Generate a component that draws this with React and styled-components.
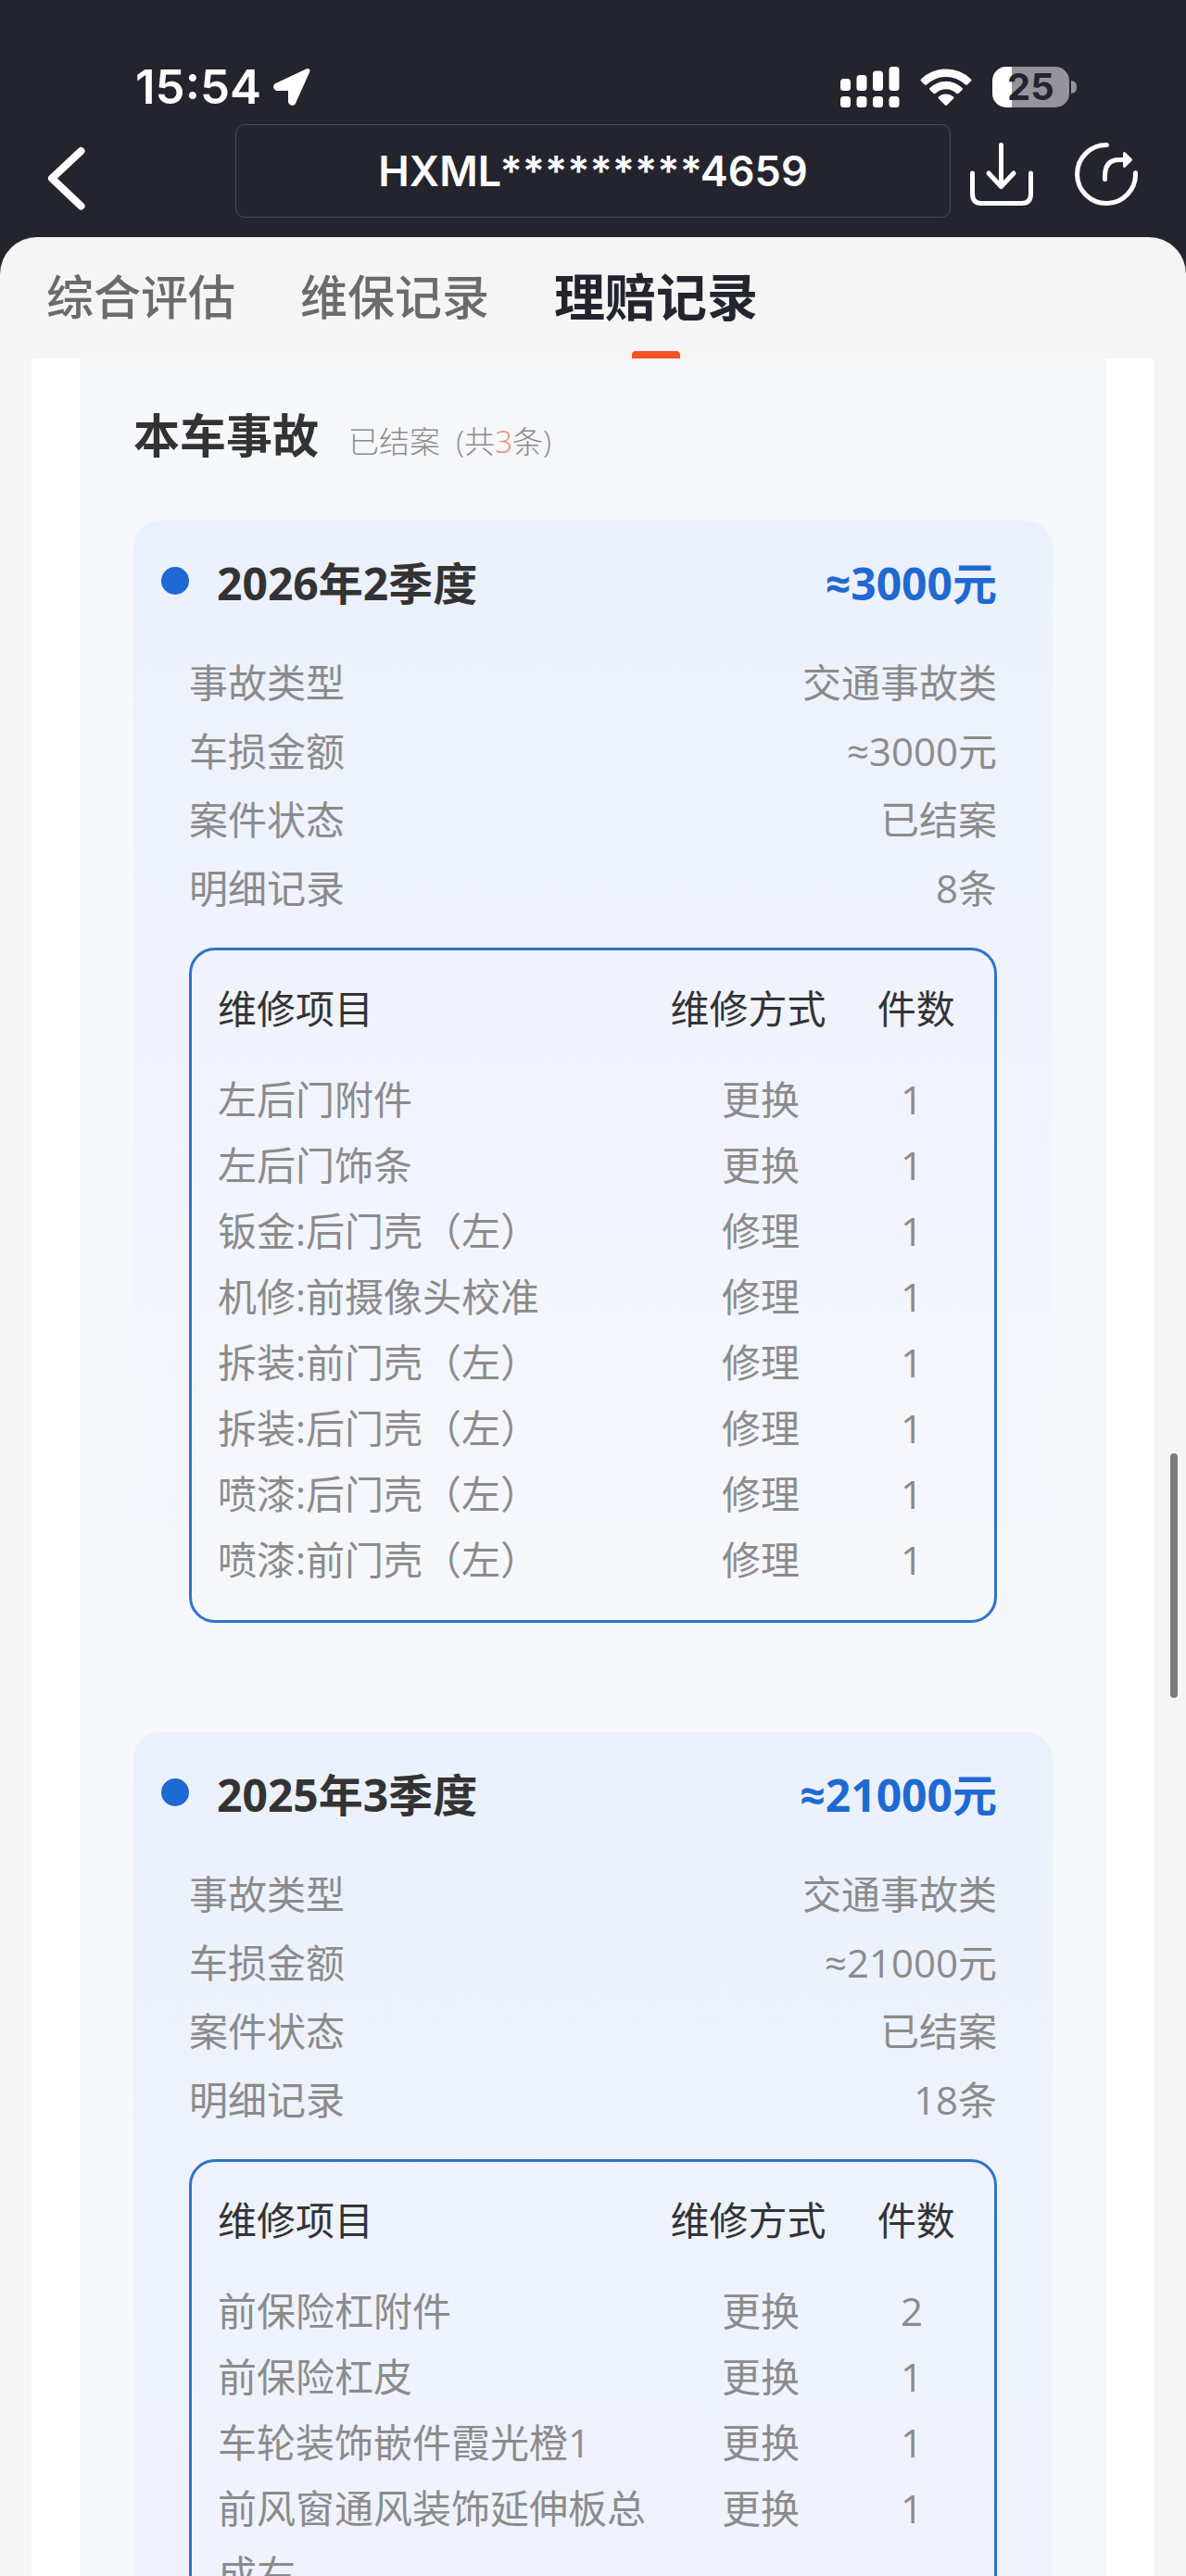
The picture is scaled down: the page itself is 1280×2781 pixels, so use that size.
import React from 'react';
import styled, { createGlobalStyle, ThemeProvider } from 'styled-components';

const theme = {
  colors: {
    navy: '#24242e',
    navBorder: '#4a4a56',
    page: '#f5f5f5',
    panel: '#f5f7fb',
    cardTop: '#ebf1fc',
    cardMiddle: '#f0f3fe',
    text: '#333333',
    muted: '#8b8b8b',
    tab: '#6b6b6e',
    blue: '#1f69d2',
    tableBorder: '#2f72c9',
    accent: '#f45127',
    count: '#fa8a78',
  },
  fonts: {
    ui: '"Inter", "Noto Sans CJK SC", sans-serif',
    report: '"Open Sans", "Noto Sans CJK SC", sans-serif',
  },
};

const GlobalStyle = createGlobalStyle`
  * {
    box-sizing: border-box;
  }

  body {
    margin: 0;
  }

  h1, h2, h3, p, dl, dd {
    margin: 0;
  }

  button {
    padding: 0;
    border: 0;
    background: none;
    font: inherit;
    color: inherit;
    cursor: pointer;
  }
`;

const Screen = styled.div`
  display: flex;
  flex-direction: column;
  height: 100vh;
  overflow: hidden;
  background: ${({ theme }) => theme.colors.navy};
  font-family: ${({ theme }) => theme.fonts.ui};
`;

const StatusBar = styled.div`
  display: flex;
  justify-content: space-between;
  align-items: center;
  padding: 66px 118px 0 146px;
  color: #fff;
`;

const StatusGroup = styled.div`
  display: flex;
  align-items: center;
  gap: ${({ $gap }) => $gap}px;
  height: 56px;
`;

const Clock = styled.span`
  font-size: 51px;
  font-weight: 600;
  line-height: 56px;
`;

const Battery = styled.div`
  display: flex;
  align-items: center;
  gap: 2px;
`;

const BatteryBody = styled.div`
  width: 83px;
  height: 44px;
  border-radius: 15px;
  background: linear-gradient(to right, #fff 25%, #95949b 25%);
  color: ${({ theme }) => theme.colors.navy};
  font-size: 40px;
  font-weight: 700;
  line-height: 44px;
  text-align: center;
`;

const BatteryCap = styled.div`
  width: 6px;
  height: 14px;
  border-radius: 0 6px 6px 0;
  background: #95949b;
`;

const NavBar = styled.header`
  display: grid;
  grid-template-columns: 203px 1fr 203px;
  align-items: center;
  margin: 12px 0 21px;
  padding: 0 51px;
`;

const NavActions = styled.div`
  display: flex;
  justify-content: flex-end;
  gap: 44px;
`;

const IconButton = styled.button`
  display: flex;
`;

const VinField = styled.input`
  width: 100%;
  height: 101px;
  padding: 0;
  border: 1px solid ${({ theme }) => theme.colors.navBorder};
  border-radius: 10px;
  background: transparent;
  color: #fff;
  font-family: inherit;
  font-size: 45px;
  font-weight: 600;
  text-align: center;
  outline: none;
`;

const Sheet = styled.main`
  position: relative;
  display: flex;
  flex: 1;
  flex-direction: column;
  min-height: 0;
  border-radius: 40px 40px 0 0;
  background: ${({ theme }) => theme.colors.page};
`;

const Tabs = styled.nav`
  display: flex;
  flex: none;
  gap: 70px;
  height: 131px;
  padding: 0 50px;
`;

const Tab = styled.button`
  position: relative;
  color: ${({ theme, $active }) => ($active ? theme.colors.navy : theme.colors.tab)};
  font-size: ${({ $active }) => ($active ? 55 : 51)}px;
  font-weight: ${({ $active }) => ($active ? 700 : 500)};
  line-height: 131px;

  &::after {
    content: '';
    display: ${({ $active }) => ($active ? 'block' : 'none')};
    position: absolute;
    bottom: 0;
    left: 50%;
    width: 52px;
    height: 8px;
    margin-left: -26px;
    border-radius: 4px 4px 0 0;
    background: ${({ theme }) => theme.colors.accent};
  }
`;

const Report = styled.div`
  flex: 1;
  min-height: 0;
  margin: 0 34px;
  padding: 0 52px;
  overflow: hidden;
  border-radius: 5px 5px 0 0;
  background: #fff;
  font-family: ${({ theme }) => theme.fonts.report};
`;

const Section = styled.section`
  min-height: 100%;
  padding: 48px 58px 0;
  background: ${({ theme }) => theme.colors.panel};
`;

const SectionHeader = styled.div`
  display: flex;
  align-items: baseline;
  gap: 32px;
  padding-bottom: 50px;
  line-height: 70px;
`;

const SectionTitle = styled.h2`
  color: ${({ theme }) => theme.colors.text};
  font-size: 50px;
  font-weight: 700;
`;

const SectionNote = styled.p`
  color: ${({ theme }) => theme.colors.muted};
  font-size: 33px;
  font-weight: 300;
`;

const Count = styled.span`
  color: ${({ theme }) => theme.colors.count};
`;

const Card = styled.article`
  margin-bottom: 58px;
  padding: 33px 60px 60px;
  border-radius: 28px;
  background: linear-gradient(
    ${({ theme }) => theme.colors.cardTop},
    ${({ theme }) => theme.colors.cardMiddle} ${({ $fade }) => $fade / 2}px,
    ${({ theme }) => theme.colors.panel} ${({ $fade }) => $fade}px
  );
`;

const CardHeader = styled.div`
  display: flex;
  align-items: flex-start;
  gap: 30px;
  margin: 0 0 35px -30px;
  line-height: 70px;
`;

const Dot = styled.span`
  width: 30px;
  height: 30px;
  margin-top: 17px;
  border-radius: 50%;
  background: ${({ theme }) => theme.colors.blue};
`;

const Quarter = styled.h3`
  flex: 1;
  color: ${({ theme }) => theme.colors.text};
  font-size: 48px;
  font-weight: 700;
`;

const Amount = styled.span`
  color: ${({ theme }) => theme.colors.blue};
  font-size: 48px;
  font-weight: 700;
`;

const Details = styled.dl`
  color: ${({ theme }) => theme.colors.muted};
  font-size: 42px;
  line-height: 74px;
`;

const DetailRow = styled.div`
  display: flex;
  justify-content: space-between;
`;

const TableBox = styled.div`
  margin-top: 27px;
  padding: 0 24px 30px 28px;
  border: 3px solid ${({ theme }) => theme.colors.tableBorder};
  border-radius: 28px;
`;

const RepairTable = styled.table`
  width: 100%;
  border-collapse: collapse;
  table-layout: fixed;
  font-size: 42px;
  line-height: 71px;
`;

const HeadCell = styled.th`
  width: ${({ $width }) => $width};
  padding: 27px 0 27px ${({ $indent }) => $indent || 0}px;
  color: ${({ theme }) => theme.colors.text};
  font-weight: 400;
  text-align: left;
  white-space: nowrap;
`;

const Cell = styled.td`
  padding: 0;
  color: ${({ theme }) => theme.colors.muted};
  text-align: ${({ $center }) => ($center ? 'center' : 'left')};
  vertical-align: top;
`;

const ScrollThumb = styled.div`
  position: absolute;
  top: 52%;
  right: 9px;
  width: 8px;
  height: 264px;
  border-radius: 4px;
  background: #7b7b7b;
`;

const LocationIcon = () => (
  <svg width="42" height="42" viewBox="0 0 42 42" fill="#fff" stroke="#fff" strokeWidth="5" strokeLinejoin="round">
    <path d="M38 3.500L4 19.500Q3 21.500 5 22.500H19.500V37Q20.500 39 22.500 38Z" />
  </svg>
);

const SignalIcon = () => (
  <svg width="64" height="44" viewBox="0 0 64 44" fill="#fff">
    <rect x="0" y="13" width="11" height="13" rx="3.500" />
    <rect x="17.500" y="9" width="11" height="17" rx="3.500" />
    <rect x="35" y="4.500" width="11" height="21.500" rx="3.500" />
    <rect x="52.500" y="0" width="11" height="26" rx="3.500" />
    <rect x="0" y="32" width="11" height="12" rx="3.500" />
    <rect x="17.500" y="32" width="11" height="12" rx="3.500" />
    <rect x="35" y="32" width="11" height="12" rx="3.500" />
    <rect x="52.500" y="32" width="11" height="12" rx="3.500" />
  </svg>
);

const WifiIcon = () => (
  <svg width="56" height="42" viewBox="0 0 56 42" fill="#fff">
    <path d="M1 12.500A38.500 38.500 0 0 1 55 12.500Q56 13.500 55 14.500L51 18.500Q50 19.200 49 18.500A30 30 0 0 0 7 18.500Q6 19.200 5 18.500L1 14.500Q0 13.500 1 12.500Z" />
    <path d="M10.500 22A25 25 0 0 1 45.500 22Q46.300 23 45.500 24L41.300 28Q40.500 28.600 39.500 28A16.500 16.500 0 0 0 16.500 28Q15.500 28.600 14.700 28L10.500 24Q9.700 23 10.500 22Z" />
    <path d="M20 31.500A12 12 0 0 1 36 31.500Q36.800 32.500 36 33.500L29 40.500Q28 41.300 27 40.500L20 33.500Q19.200 32.500 20 31.500Z" />
  </svg>
);

const BackIcon = () => (
  <svg width="42" height="84" viewBox="0 0 42 84" fill="none" stroke="#fff" strokeWidth="8" strokeLinecap="round" strokeLinejoin="round">
    <path d="M36.500 20L5 49.500L36.500 79.500" />
  </svg>
);

const DownloadIcon = () => (
  <svg width="68" height="74" viewBox="0 0 68 74" fill="none" stroke="#fff" strokeWidth="5" strokeLinecap="round" strokeLinejoin="round">
    <path d="M33.500 8.500V52M20 39L33.500 53.500L47 39" />
    <path d="M2.500 39V61Q2.500 71.500 12 71.500H56Q65.500 71.500 65.500 61V39" />
  </svg>
);

const ShareIcon = () => (
  <svg width="70" height="74" viewBox="0 0 70 74" fill="none" stroke="#fff" strokeWidth="5" strokeLinecap="round" strokeLinejoin="round">
    <path d="M35.500 8.500A31.500 31.500 0 1 0 66.500 38.500" />
    <path d="M33.500 45.500V42Q33.500 24.500 49 24.500H58" />
    <path d="M54.500 17.500L61.500 24.500L54.500 31.500Z" fill="#fff" strokeWidth="3" />
  </svg>
);

const tabs = ['综合评估', '维保记录', '理赔记录'];

const accidents = [
  {
    quarter: '2026年2季度',
    amount: '≈3000元',
    fade: 1100,
    details: [
      ['事故类型', '交通事故类'],
      ['车损金额', '≈3000元'],
      ['案件状态', '已结案'],
      ['明细记录', '8条'],
    ],
    repairs: [
      ['左后门附件', '更换', 1],
      ['左后门饰条', '更换', 1],
      ['钣金:后门壳（左）', '修理', 1],
      ['机修:前摄像头校准', '修理', 1],
      ['拆装:前门壳（左）', '修理', 1],
      ['拆装:后门壳（左）', '修理', 1],
      ['喷漆:后门壳（左）', '修理', 1],
      ['喷漆:前门壳（左）', '修理', 1],
    ],
  },
  {
    quarter: '2025年3季度',
    amount: '≈21000元',
    fade: 2000,
    details: [
      ['事故类型', '交通事故类'],
      ['车损金额', '≈21000元'],
      ['案件状态', '已结案'],
      ['明细记录', '18条'],
    ],
    repairs: [
      ['前保险杠附件', '更换', 2],
      ['前保险杠皮', '更换', 1],
      ['车轮装饰嵌件霞光橙1', '更换', 1],
      ['前风窗通风装饰延伸板总成右', '更换', 1],
    ],
  },
];

const AccidentCard = ({ quarter, amount, fade, details, repairs }) => (
  <Card $fade={fade}>
    <CardHeader>
      <Dot />
      <Quarter>{quarter}</Quarter>
      <Amount>{amount}</Amount>
    </CardHeader>
    <Details>
      {details.map(([label, value]) => (
        <DetailRow key={label}>
          <dt>{label}</dt>
          <dd>{value}</dd>
        </DetailRow>
      ))}
    </Details>
    <TableBox>
      <RepairTable>
        <thead>
          <tr>
            <HeadCell scope="col">维修项目</HeadCell>
            <HeadCell scope="col" $width="24%">维修方式</HeadCell>
            <HeadCell scope="col" $width="16%" $indent={28}>件数</HeadCell>
          </tr>
        </thead>
        <tbody>
          {repairs.map(([name, method, count]) => (
            <tr key={name}>
              <Cell>{name}</Cell>
              <Cell $center>{method}</Cell>
              <Cell $center>{count}</Cell>
            </tr>
          ))}
        </tbody>
      </RepairTable>
    </TableBox>
  </Card>
);

export default () => (
  <ThemeProvider theme={theme}>
    <GlobalStyle />
    <Screen>
      <StatusBar>
        <StatusGroup $gap={12}>
          <Clock>15:54</Clock>
          <LocationIcon />
        </StatusGroup>
        <StatusGroup $gap={22}>
          <SignalIcon />
          <WifiIcon />
          <Battery>
            <BatteryBody>25</BatteryBody>
            <BatteryCap />
          </Battery>
        </StatusGroup>
      </StatusBar>
      <NavBar>
        <IconButton aria-label="返回">
          <BackIcon />
        </IconButton>
        <VinField aria-label="车架号" value="HXML*********4659" readOnly />
        <NavActions>
          <IconButton aria-label="下载">
            <DownloadIcon />
          </IconButton>
          <IconButton aria-label="分享">
            <ShareIcon />
          </IconButton>
        </NavActions>
      </NavBar>
      <Sheet>
        <Tabs>
          {tabs.map(tab => (
            <Tab key={tab} $active={tab === '理赔记录'}>{tab}</Tab>
          ))}
        </Tabs>
        <Report>
          <Section>
            <SectionHeader>
              <SectionTitle>本车事故</SectionTitle>
              <SectionNote>
                已结案&nbsp; (共<Count>3</Count>条)
              </SectionNote>
            </SectionHeader>
            {accidents.map(accident => (
              <AccidentCard key={accident.quarter} {...accident} />
            ))}
          </Section>
        </Report>
        <ScrollThumb />
      </Sheet>
    </Screen>
  </ThemeProvider>
);
